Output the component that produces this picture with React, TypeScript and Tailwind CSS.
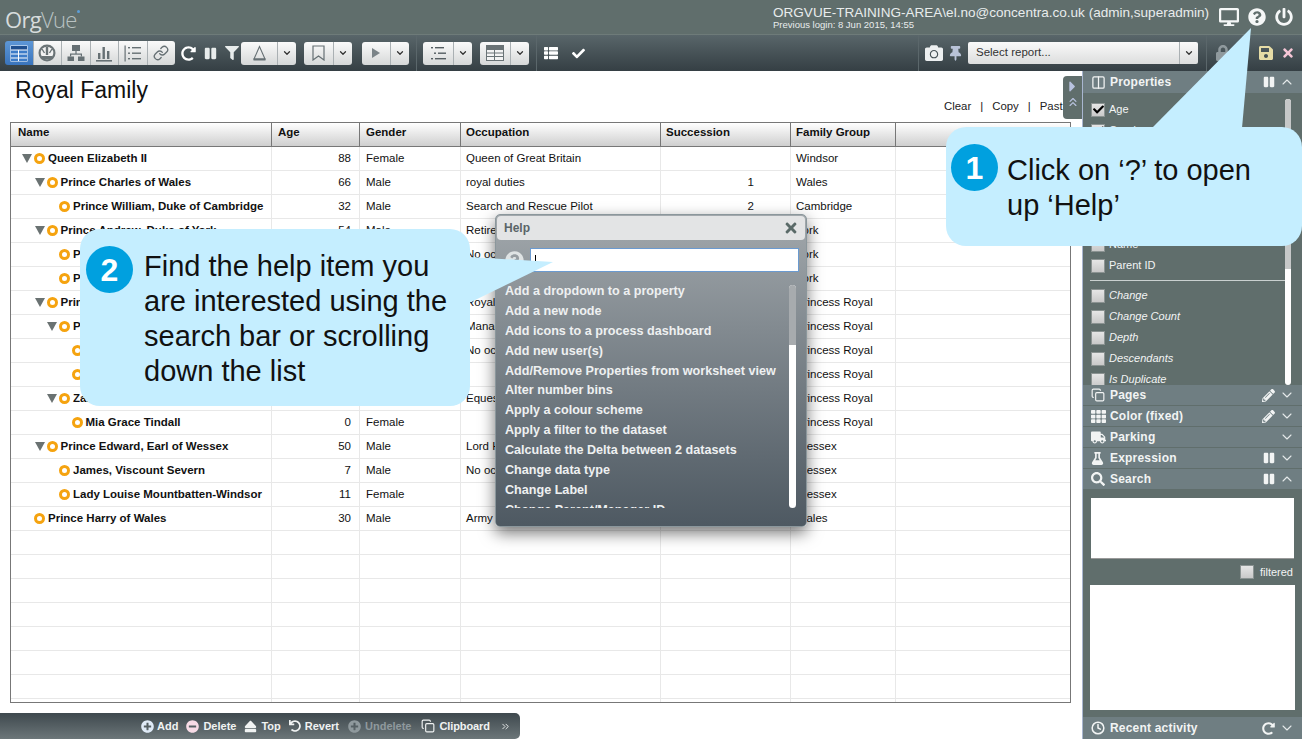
import React from "react";
import {
  FaRedoAlt, FaPause, FaFilter, FaCamera, FaThumbtack, FaSave, FaTimes, FaDesktop, FaQuestionCircle,
  FaPowerOff, FaCheck, FaPencilAlt, FaTruck, FaFlask, FaSearch, FaPlusCircle, FaMinusCircle, FaEject,
  FaUndo, FaThList, FaLock, FaBell, FaCaretRight, FaTh,
} from "react-icons/fa";
import { ChevronDown, ChevronUp, ChevronsUp, ChevronsRight, Columns2, Copy, Clock, Link } from "lucide-react";

const font = "[font-family:'Liberation_Sans',Arial,sans-serif]";

type Row = { n: string; d: number; p: boolean; a?: string; g?: string; o?: string; s?: string; f?: string };
const rows: Row[] = [
  { n: "Queen Elizabeth II", d: 0, p: true, a: "88", g: "Female", o: "Queen of Great Britain", f: "Windsor" },
  { n: "Prince Charles of Wales", d: 1, p: true, a: "66", g: "Male", o: "royal duties", s: "1", f: "Wales" },
  { n: "Prince William, Duke of Cambridge", d: 2, p: false, a: "32", g: "Male", o: "Search and Rescue Pilot", s: "2", f: "Cambridge" },
  { n: "Prince Andrew, Duke of York", d: 1, p: true, a: "54", g: "Male", o: "Retired", f: "York" },
  { n: "Princess Beatrice of York", d: 2, p: false, a: "26", g: "Female", o: "No occupation", f: "York" },
  { n: "Princess Eugenie of York", d: 2, p: false, a: "24", g: "Female", o: "", f: "York" },
  { n: "Princess Anne, Princess Royal", d: 1, p: true, a: "64", g: "Female", o: "Royal duties", f: "Princess Royal" },
  { n: "Peter Phillips", d: 2, p: true, a: "36", g: "Male", o: "Management", f: "Princess Royal" },
  { n: "Savannah Phillips", d: 3, p: false, a: "3", g: "Female", o: "No occupation", f: "Princess Royal" },
  { n: "Isla Phillips", d: 3, p: false, a: "2", g: "Female", o: "", f: "Princess Royal" },
  { n: "Zara Tindall", d: 2, p: true, a: "33", g: "Female", o: "Equestrian", f: "Princess Royal" },
  { n: "Mia Grace Tindall", d: 3, p: false, a: "0", g: "Female", f: "Princess Royal" },
  { n: "Prince Edward, Earl of Wessex", d: 1, p: true, a: "50", g: "Male", o: "Lord High", f: "Wessex" },
  { n: "James, Viscount Severn", d: 2, p: false, a: "7", g: "Male", o: "No occupation", f: "Wessex" },
  { n: "Lady Louise Mountbatten-Windsor", d: 2, p: false, a: "11", g: "Female", f: "Wessex" },
  { n: "Prince Harry of Wales", d: 0, p: false, a: "30", g: "Male", o: "Army Officer", f: "Wales" },
];
const blank = Array.from({ length: 8 });

const help = ["Add a dropdown to a property", "Add a new node", "Add icons to a process dashboard", "Add new user(s)", "Add/Remove Properties from worksheet view", "Alter number bins", "Apply a colour scheme", "Apply a filter to the dataset", "Calculate the Delta between 2 datasets", "Change data type", "Change Label", "Change Parent/Manager ID"];

const TableIcon = () => (
  <svg width="18" height="17" viewBox="0 0 18 17">
    <rect x="0.5" y="0.5" width="17" height="16" fill="#fff" />
    <rect x="1" y="1" width="16" height="3.5" fill="#1f4f8f" />
    <path d="M1 5.5h7v3H1zM9 5.5h8v3H9zM1 9.5h7v3H1zM9 9.5h8v3H9zM1 13.5h7v2.5H1zM9 13.5h8v2.5H9z" fill="#3d7cc8" />
  </svg>
);
const GaugeIcon = () => (
  <svg width="18" height="18" viewBox="0 0 18 18">
    <circle cx="9" cy="9" r="8.5" fill="#6a7376" />
    <circle cx="9" cy="9" r="6.3" fill="#f3f3f3" />
    <rect x="7.8" y="3" width="2.4" height="8" fill="#6a7376" />
    <path d="M4 5l2.5 4M14 5l-2.5 4" stroke="#6a7376" strokeWidth="1.4" />
    <path d="M4 13.5h10" stroke="#6a7376" strokeWidth="3" />
  </svg>
);
const OrgIcon = () => (
  <svg width="18" height="18" viewBox="0 0 18 18" fill="#667074">
    <rect x="5" y="1" width="8" height="6" />
    <rect x="8.4" y="7" width="1.2" height="3" />
    <rect x="3" y="9.5" width="12" height="1.2" />
    <rect x="3" y="10" width="1.2" height="2.5" /><rect x="13.8" y="10" width="1.2" height="2.5" />
    <rect x="0.5" y="12.5" width="6.5" height="4.5" /><rect x="11" y="12.5" width="6.5" height="4.5" />
  </svg>
);
const BarsIcon = () => (
  <svg width="16" height="17" viewBox="0 0 16 17" fill="#667074">
    <rect x="2" y="8" width="2.4" height="6" /><rect x="6.5" y="2" width="2.4" height="12" /><rect x="11" y="6" width="2.4" height="8" />
    <rect x="0" y="15" width="16" height="1.6" />
  </svg>
);
const ListIcon = () => (
  <svg width="17" height="17" viewBox="0 0 17 17" fill="#667074">
    <rect x="0.5" y="0.5" width="1.2" height="16" />
    <rect x="4" y="2" width="2" height="1.4" /><rect x="8" y="2" width="9" height="1.4" />
    <rect x="4" y="7.5" width="2" height="1.4" /><rect x="8" y="7.5" width="9" height="1.4" />
    <rect x="4" y="13" width="2" height="1.4" /><rect x="8" y="13" width="9" height="1.4" />
  </svg>
);
const TriIcon = () => (
  <svg width="15" height="16" viewBox="0 0 15 16" fill="none" stroke="#667074">
    <path d="M7.5 1.5L2 14h11z" strokeWidth="1.1" />
    <path d="M1.5 14.5h12" strokeWidth="1.8" />
  </svg>
);
const MarkIcon = () => (
  <svg width="13" height="16" viewBox="0 0 13 16" fill="none" stroke="#667074" strokeWidth="1.2">
    <path d="M1 1h11v14l-5.5-4L1 15z" />
  </svg>
);
const PlayIcon = () => (
  <svg width="10" height="12" viewBox="0 0 10 12"><path d="M1 1l8 5-8 5z" fill="#7b8488" /></svg>
);
const IndentIcon = () => (
  <svg width="18" height="15" viewBox="0 0 18 15" fill="#555e62">
    <rect x="2" y="1" width="2" height="1.4" /><rect x="6" y="1" width="9" height="1.4" />
    <rect x="5" y="6.5" width="2" height="1.4" /><rect x="9" y="6.5" width="8" height="1.4" />
    <rect x="2" y="12" width="2" height="1.4" /><rect x="6" y="12" width="11" height="1.4" />
  </svg>
);
const GridIcon = () => (
  <svg width="18" height="16" viewBox="0 0 18 16">
    <rect x="0.5" y="0.5" width="17" height="15" fill="#f3f3f3" stroke="#6a7376" />
    <rect x="1" y="1" width="16" height="4" fill="#6a7376" />
    <path d="M1 8h16M1 11.5h16M8.5 5v10" stroke="#6a7376" />
  </svg>
);

function Btn({ children, active }: { children: React.ReactNode; active?: boolean }) {
  return (
    <div className={`flex-1 h-full flex items-center justify-center border-r border-[#aab0b3] last:border-r-0 ${active ? "bg-gradient-to-b from-[#5e97d6] to-[#3a74bd]" : "bg-gradient-to-b from-[#fafafa] to-[#d6d8d8]"}`}>{children}</div>
  );
}
function Drop({ w, children }: { w: string; children: React.ReactNode }) {
  return (
    <div className={`${w} h-[23px] shrink-0 flex rounded-[3px] overflow-hidden bg-gradient-to-b from-[#fafafa] to-[#d6d8d8]`}>
      <div className="flex-1 flex items-center justify-center border-r border-[#aab0b3]">{children}</div>
      <div className="w-[18px] flex items-center justify-center text-[#333]"><ChevronDown size={10} strokeWidth={3} /></div>
    </div>
  );
}
function Check({ on }: { on?: boolean }) {
  return (
    <span className="relative w-[14px] h-[14px] shrink-0 border border-[#8b9392] bg-gradient-to-b from-[#e6e6e6] to-[#c9c9c9] block">
      {on && <FaCheck className="absolute left-[1px] top-[0px] text-black" size={11} />}
    </span>
  );
}
function Prop({ label, on, italic }: { label: string; on?: boolean; italic?: boolean }) {
  return (
    <div className={`h-[21px] flex items-center gap-[4px] pl-[8px] text-[11px] text-[#f2f4f4] ${italic ? "italic" : ""}`}>
      <Check on={on} /><span>{label}</span>
    </div>
  );
}
function Section({ icon, label, right, tall }: { icon: React.ReactNode; label: string; right?: React.ReactNode; tall?: boolean }) {
  return (
    <div className={`${tall ? "h-[22px]" : "h-[20px] mb-[1px]"} shrink-0 bg-[#6f7e82] flex items-center pl-[8px] pr-[7px] text-[#f2f4f4]`}>
      <span className="w-[17px] flex items-center">{icon}</span>
      <span className="text-[12px] font-bold ml-[2px] tracking-[0.2px]">{label}</span>
      <span className="ml-auto flex items-center gap-[4px]">{right}</span>
    </div>
  );
}
const Down = () => <ChevronDown size={16} strokeWidth={1.6} className="text-[#e6eaea]" />;
const Up = () => <ChevronUp size={16} strokeWidth={1.6} className="text-[#e6eaea]" />;

function Cell({ w, right, children }: { w: string; right?: boolean; children?: React.ReactNode }) {
  return <div className={`${w} shrink-0 h-full border-r border-[#e8e8e8] flex items-center px-[6px] whitespace-nowrap overflow-hidden ${right ? "justify-end" : ""}`}>{children}</div>;
}
function Head({ w, children }: { w: string; children?: React.ReactNode }) {
  return <div className={`${w} shrink-0 h-full border-r border-[#777] flex items-center px-[6px] pb-[4px] font-bold`}>{children}</div>;
}

export default function App() {
  return (
    <div className={`${font} relative w-[1302px] h-[739px] overflow-hidden bg-white flex flex-col`}>
      {/* header */}
      <header className="h-[35px] shrink-0 bg-[#606e6c] flex items-center text-[#e8ecec] border-b border-[#6e7b79]">
        <div className="ml-[5px] text-[22px] leading-none text-[#d7dcdc] [font-family:'Open_Sans',sans-serif] font-light flex tracking-[-0.7px] mt-[4px]">
          <span className="font-normal">Org</span><span className="font-light text-[#b9c2c2]">Vue</span>
          <span className="w-[3px] h-[3px] mt-[2px] rounded-full bg-[#5c9ed8]" />
        </div>
        <div className="ml-auto mr-[9px] w-[437px] mt-[2px]">
          <div className="text-[13.55px] leading-[14px] whitespace-nowrap">ORGVUE-TRAINING-AREA\el.no@concentra.co.uk (admin,superadmin)</div>
          <div className="text-[9.5px] leading-[10px] -mt-[0.5px] text-[#e8ecec] whitespace-nowrap">Previous login: 8 Jun 2015, 14:55</div>
        </div>
        <div className="flex items-center gap-[9px] mr-[9px] text-[#f5f7f7]">
          <FaDesktop size={20} />
          <FaQuestionCircle size={18} />
          <FaPowerOff size={18} />
        </div>
      </header>
      {/* toolbar */}
      <div className="h-[36px] shrink-0 bg-gradient-to-b from-[#59666a] to-[#353f44] flex items-center pl-[5px] pr-[7px] text-white">
        <div className="w-[170px] h-[24px] shrink-0 flex rounded-[3px] overflow-hidden">
          <Btn active><TableIcon /></Btn>
          <Btn><GaugeIcon /></Btn>
          <Btn><OrgIcon /></Btn>
          <Btn><BarsIcon /></Btn>
          <Btn><ListIcon /></Btn>
          <Btn><Link size={16} className="text-[#667074]" /></Btn>
        </div>
        <div className="ml-[6px] w-[58px] shrink-0 flex items-center justify-between">
          <FaRedoAlt size={15} />
          <FaPause size={13} className="text-[#e8ecec]" />
          <FaFilter size={14} className="text-[#e8ecec]" />
        </div>
        <div className="ml-[2px]"><Drop w="w-[55px]"><TriIcon /></Drop></div>
        <div className="ml-[8px]"><Drop w="w-[48px]"><MarkIcon /></Drop></div>
        <div className="ml-[10px]"><Drop w="w-[47px]"><PlayIcon /></Drop></div>
        <div className="w-px h-[36px] shrink-0 bg-[#5b676b] ml-[7px]" />
        <div className="ml-[6px]"><Drop w="w-[49px]"><IndentIcon /></Drop></div>
        <div className="ml-[8px]"><Drop w="w-[49px]"><GridIcon /></Drop></div>
        <div className="w-px h-[36px] shrink-0 bg-[#5b676b] ml-[7px]" />
        <FaThList size={14} className="ml-[7px] shrink-0" />
        <FaCheck size={13} className="ml-[14px] shrink-0" />
        <div className="w-px h-[36px] shrink-0 bg-[#5b676b] ml-auto" />
        <FaCamera size={18} className="ml-[6px] text-[#eceff0] shrink-0" />
        <FaThumbtack size={15} className="ml-[5px] text-[#b9c3d8] shrink-0" />
        <div className="ml-[5px] w-[230px] h-[22px] shrink-0 rounded-[2px] bg-gradient-to-b from-[#fafafa] to-[#dcdddd] flex text-[#333] text-[11.5px]">
          <div className="flex-1 flex items-center pl-[8px] border-r border-[#aab0b3]">Select report...</div>
          <div className="w-[18px] flex items-center justify-center"><ChevronDown size={10} strokeWidth={3} /></div>
        </div>
        <div className="w-px h-[36px] shrink-0 bg-[#5b676b] ml-[8px]" />
        <FaLock size={16} className="ml-[8px] text-[#8f999d] shrink-0" />
        <FaBell size={15} className="ml-[3px] text-[#8f999d] shrink-0" />
        <FaSave size={16} className="ml-[9px] text-[#e6dca6] shrink-0" />
        <FaTimes size={14} className="ml-[7px] text-[#f5c6d6] shrink-0" />
      </div>
      {/* main */}
      <div className="flex-1 min-h-0 flex">
        <div className="relative w-[1082px] shrink-0 flex flex-col min-h-0">
          <h1 className="text-[23px] leading-[26px] text-[#111] pl-[15px] pt-[6px] font-normal">Royal Family</h1>
          <div className="h-[20px] -mt-[6px] flex items-center text-[11.4px] text-[#222] pl-[944px] whitespace-nowrap overflow-hidden">
            <span>Clear</span><span className="mx-[9px]">|</span><span>Copy</span><span className="mx-[9px]">|</span><span>Past</span>
          </div>
          {/* collapse tab */}
          <div className="absolute right-0 top-[5px] w-[19px] h-[43px] bg-[#606e6c] rounded-l-[4px] flex flex-col items-center pt-[2px] text-[#b9c3e0]">
            <FaCaretRight size={17} />
            <ChevronsUp size={14} />
          </div>
          {/* table */}
          <div className="ml-[10px] w-[1061px] h-[581px] mt-[5px] border border-[#777] text-[11.5px] text-[#111] overflow-hidden">
            <div className="h-[24px] flex bg-gradient-to-b from-[#ffffff] to-[#cfcfcf] border-b border-[#777]">
              <Head w="w-[261px] pl-[7px]">Name</Head>
              <Head w="w-[88px]">Age</Head>
              <Head w="w-[101px]">Gender</Head>
              <Head w="w-[200px] pl-[5px]">Occupation</Head>
              <Head w="w-[130px] pl-[5px]">Succession</Head>
              <Head w="w-[105px] pl-[5px]">Family Group</Head>
            </div>
            {rows.map((r) => (
              <div key={r.n} className="h-[24px] flex border-b border-[#e8e8e8]">
                <div className="w-[261px] shrink-0 h-full border-r border-[#e8e8e8] flex items-center font-bold whitespace-nowrap overflow-hidden">
                  <span style={{ width: 21 + r.d * 12.5 }} className="shrink-0 flex justify-end">
                    {r.p && (
                      <svg width="10" height="9" viewBox="0 0 10 9"><path d="M0 0h10L5 9z" fill="#6a7272" /></svg>
                    )}
                  </span>
                  <span className="ml-[2px] w-[11px] h-[11px] rounded-full border-[3px] border-[#f5a30f] shrink-0" />
                  <span className="ml-[3px]">{r.n}</span>
                </div>
                <Cell w="w-[88px] pr-[8px]" right>{r.a}</Cell>
                <Cell w="w-[101px]">{r.g}</Cell>
                <Cell w="w-[200px] pl-[5px]">{r.o}</Cell>
                <Cell w="w-[130px] pr-[36px]" right>{r.s}</Cell>
                <Cell w="w-[105px] pl-[5px]">{r.f}</Cell>
              </div>
            ))}
            {blank.map((_, i) => (
              <div key={i} className="h-[24px] flex border-b border-[#e8e8e8]">
                <Cell w="w-[261px]" /><Cell w="w-[88px]" /><Cell w="w-[101px]" /><Cell w="w-[200px]" /><Cell w="w-[130px]" /><Cell w="w-[105px]" />
              </div>
            ))}
          </div>
          {/* bottom bar */}
          <div className="mt-auto w-[520px] h-[26px] rounded-tr-[5px] rounded-br-[5px] bg-gradient-to-b from-[#3f494e] to-[#6c7679] flex items-center pl-[141px] text-[11px] font-bold text-[#f0f2f2] whitespace-nowrap">
            <FaPlusCircle size={13} className="text-[#dfeaf7]" /><span className="ml-[3px]">Add</span>
            <FaMinusCircle size={13} className="ml-[8px] text-[#f7dbe6]" /><span className="ml-[4px]">Delete</span>
            <FaEject size={13} className="ml-[8px]" /><span className="ml-[4px]">Top</span>
            <FaUndo size={12} className="ml-[8px]" /><span className="ml-[4px]">Revert</span>
            <FaPlusCircle size={13} className="ml-[9px] text-[#8f999d]" /><span className="ml-[4px] text-[#8f999d]">Undelete</span>
            <Copy size={14} className="ml-[10px]" /><span className="ml-[4px] tracking-[-0.1px]">Clipboard</span>
            <ChevronsRight size={11} className="ml-[10px]" />
          </div>
        </div>
        {/* right panel */}
        <aside className="relative w-[220px] shrink-0 bg-[#606e6c] flex flex-col min-h-0 border-l border-[#a9b6d0]">
          <Section tall icon={<Columns2 size={15} />} label="Properties" right={<><FaPause size={12} /><Up /></>} />
          <div className="relative h-[292px] shrink-0 overflow-hidden pt-[6px]">
            <Prop label="Age" on />
            <Prop label="Gender" on />
            <Prop label="Occupation" on />
            <Prop label="Succession" on />
            <Prop label="Family Group" on />
            <Prop label="Label" />
            <div className="h-[9px]" />
            <Prop label="Name" />
            <Prop label="Parent ID" />
            <div className="h-px bg-[#c9d0cf] mx-[7px] mr-[17px] my-[4px]" />
            <Prop label="Change" italic />
            <Prop label="Change Count" italic />
            <Prop label="Depth" italic />
            <Prop label="Descendants" italic />
            <Prop label="Is Duplicate" italic />
            <div className="absolute right-[11px] top-[6px] bottom-[0px] w-[6px] rounded-full bg-white overflow-hidden">
              <div className="h-[170px] bg-[#c6c8c8]" />
            </div>
          </div>
          <Section icon={<Copy size={14} />} label="Pages" right={<><FaPencilAlt size={13} /><Down /></>} />
          <Section icon={<FaTh size={15} />} label="Color (fixed)" right={<><FaPencilAlt size={13} /><Down /></>} />
          <Section icon={<FaTruck size={15} />} label="Parking" right={<Down />} />
          <Section icon={<FaFlask size={13} />} label="Expression" right={<><FaPause size={12} /><Down /></>} />
          <Section icon={<FaSearch size={14} />} label="Search" right={<><FaPause size={12} /><Up /></>} />
          <div className="flex-1 min-h-0 flex flex-col px-[8px] pt-[8px]">
            <div className="h-[61px] bg-white border-b border-[#999]" />
            <div className="h-[26px] flex items-center justify-end gap-[6px] text-[11px] text-[#f2f4f4] pr-[1px]">
              <Check /><span>filtered</span>
            </div>
            <div className="h-[125px] -mx-[1px] bg-white" />
          </div>
          <Section tall icon={<Clock size={14} strokeWidth={2.6} />} label="Recent activity" right={<><FaRedoAlt size={13} /><Down /></>} />
        </aside>
      </div>
      {/* help dialog */}
      <div className="absolute left-[495px] top-[214px] w-[312px] h-[313px] rounded-[5px] bg-gradient-to-b from-[#a2a8ac] to-[#4e5962] border border-[#8b979c] shadow-[0_6px_16px_rgba(0,0,0,0.55)] overflow-hidden">
        <div className="h-[24px] mx-[1px] mt-[1px] rounded-[4px] bg-[#e3e4e5] flex items-center pl-[7px] pr-[6px] text-[12px] font-bold text-[#5a6468]">
          <span>Help</span>
          <FaTimes size={16} className="ml-auto text-[#5a6a68]" />
        </div>
        <div className="flex items-center mt-[8px] pl-[9px]">
          <FaQuestionCircle size={19} className="text-[#dfe3e4]" />
          <div className="ml-[6px] w-[269px] h-[24px] bg-white border border-[#6a9ad0] flex items-center pl-[4px]">
            <span className="w-px h-[11px] bg-black" />
          </div>
        </div>
        <div className="relative mt-[10px] mx-[9px] h-[226px]">
          <div className="h-[226px] overflow-hidden text-[12.6px] font-bold text-[#eef0f1] whitespace-nowrap">
            {help.map((h) => <div key={h} className="h-[19.9px] leading-[19.9px]">{h}</div>)}
          </div>
          <div className="absolute right-[1px] top-[3px] w-[7px] h-[223px] rounded-full bg-white overflow-hidden">
            <div className="h-[60px] bg-[#a7abae]" />
          </div>
        </div>
      </div>
      {/* callout 1 */}
      <div className="absolute left-[946px] top-[127px] w-[356px] h-[119px] bg-[#c5eeff] rounded-[20px] flex items-center pl-[5px]">
        <svg className="absolute left-[206px] -top-[99px]" width="100" height="100" viewBox="0 0 100 100"><polygon points="0,100 99,0 90,100" fill="#c5eeff" /></svg>
        <div className="w-[47px] h-[47px] -mt-[38px] rounded-full bg-[#00a0df] text-white text-[32px] font-bold flex items-center justify-center shrink-0">1</div>
        <div className="ml-[9px] mt-[2px] text-[29px] leading-[35px] text-[#111]">Click on ‘?’ to open<br />up ‘Help’</div>
      </div>
      {/* callout 2 */}
      <div className="absolute left-[80px] top-[229px] w-[390px] h-[177px] bg-[#c5eeff] rounded-[20px] flex items-start pl-[6px] pt-[20px]">
        <svg className="absolute left-[389px] top-[26px]" width="85" height="50" viewBox="0 0 85 50"><polygon points="0,2 84,7 0,48" fill="#c5eeff" /></svg>
        <div className="w-[47px] h-[47px] -mt-[3px] rounded-full bg-[#00a0df] text-white text-[32px] font-bold flex items-center justify-center shrink-0">2</div>
        <div className="ml-[11px] text-[29px] leading-[35px] text-[#111]">Find the help item you<br />are interested using the<br />search bar or scrolling<br />down the list</div>
      </div>
    </div>
  );
}
